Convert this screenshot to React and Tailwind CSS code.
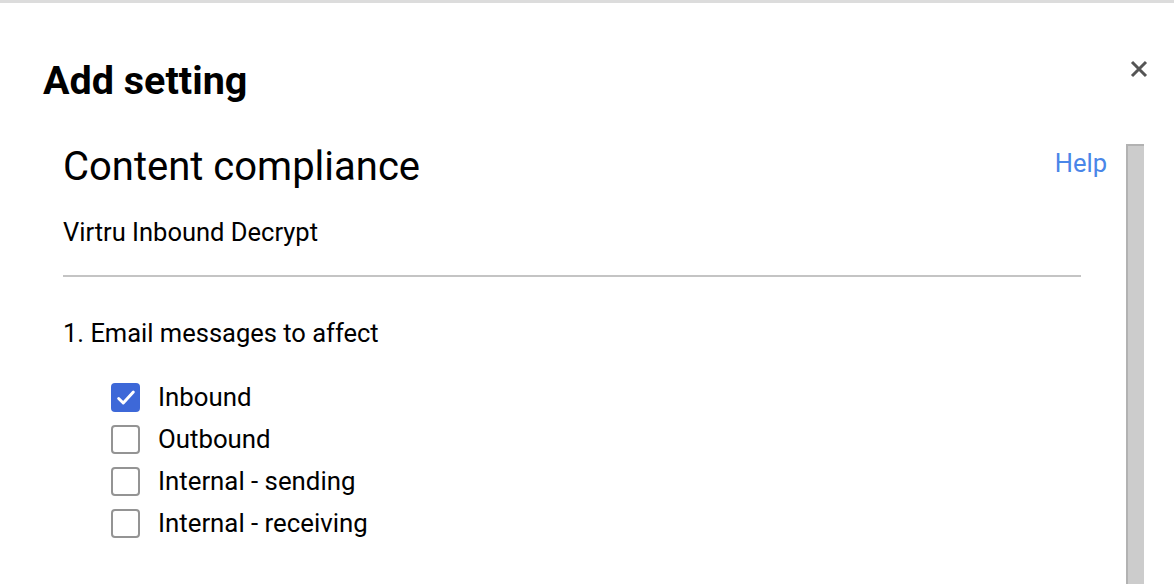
import React from "react";

const options = [
  { label: "Inbound", checked: true },
  { label: "Outbound", checked: false },
  { label: "Internal - sending", checked: false },
  { label: "Internal - receiving", checked: false },
];

const Checkbox = ({ checked }) =>
  checked ? (
    <span className="flex h-[29px] w-[29px] items-center justify-center rounded-[4px] bg-[#3d68d8]">
      <svg width="22" height="22" viewBox="0 0 24 24" fill="none" stroke="white" strokeWidth="3.2" strokeLinecap="round" strokeLinejoin="round">
        <path d="M4 12.5l5 5L20 5.5" />
      </svg>
    </span>
  ) : (
    <span className="block h-[29px] w-[29px] rounded-[4px] border-[2.5px] border-[#949494] bg-white" />
  );

const App = () => {
  return (
    <div className="flex h-[584px] w-full flex-col overflow-hidden bg-white font-['Roboto',sans-serif] text-black">
      <div className="h-[3px] w-full bg-[#dcdcdc]" />
      <div className="flex items-start justify-between pl-[43px] pr-[26px] pt-[55px]">
        <h1 className="text-[39.5px] font-bold leading-[46px]">Add setting</h1>
        <svg className="mt-[2px]" width="18" height="18" viewBox="0 0 18 18" stroke="#555" strokeWidth="3" strokeLinecap="butt">
          <path d="M2 2l14 14M16 2L2 16" />
        </svg>
      </div>
      <div className="flex flex-1 pt-[40px]">
        <div className="flex flex-1 flex-col pl-[63px] pr-[19px]">
          <div className="flex items-start justify-between">
            <h2 className="text-[40px] leading-[46px]">Content compliance</h2>
            <a className="mt-[4px] text-[25.5px] leading-[30px] text-[#4a86e8]">Help</a>
          </div>
          <p className="mt-[27px] text-[25.5px] leading-[30px]">Virtru Inbound Decrypt</p>
          <div className="mr-[26px] mt-[28px] h-[2px] bg-[#c4c4c4]" />
          <p className="mt-[41px] text-[25.5px] leading-[30px]">1. Email messages to affect</p>
          <div className="mt-[35px] flex flex-col gap-[13px] pl-[48px]">
            {options.map((o) => (
              <label key={o.label} className="flex items-center gap-[18px]">
                <Checkbox checked={o.checked} />
                <span className="text-[25.8px] leading-[29px]">{o.label}</span>
              </label>
            ))}
          </div>
        </div>
        <div className="mr-[30px] w-[18px] border-l-2 border-t-2 border-[#b2b2b2] bg-[#cccccc]" />
      </div>
    </div>
  );
};

export default App;
